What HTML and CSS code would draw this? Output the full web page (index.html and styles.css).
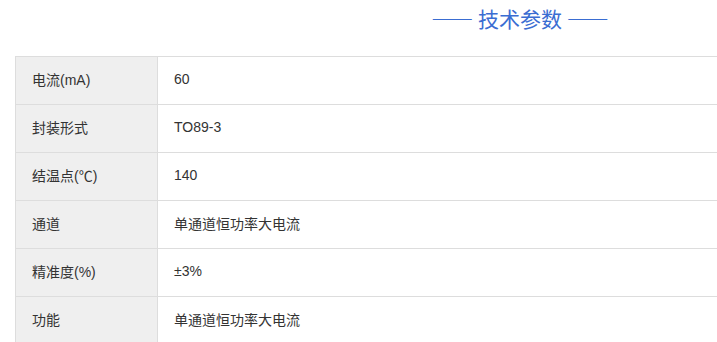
FILE: index.html
```html
<!DOCTYPE html>
<html lang="zh">
<head>
<meta charset="utf-8">
<link rel="stylesheet" href="styles.css">
</head>
<body>
<div class="wrap">
  <h2 class="title">—— 技术参数 ——</h2>
  <table class="params">
    <tr><td class="k">电流(mA)</td><td class="v">60</td></tr>
    <tr><td class="k">封装形式</td><td class="v">TO89-3</td></tr>
    <tr><td class="k">结温点(℃)</td><td class="v">140</td></tr>
    <tr><td class="k">通道</td><td class="v">单通道恒功率大电流</td></tr>
    <tr><td class="k">精准度(%)</td><td class="v">±3%</td></tr>
    <tr><td class="k">功能</td><td class="v">单通道恒功率大电流</td></tr>
  </table>
</div>
</body>
</html>
```
FILE: styles.css
```css
html, body {
  margin: 0;
  padding: 0;
  background: #fff;
  font-family: "Microsoft YaHei", "Noto Sans CJK SC", "Liberation Sans", sans-serif;
  color: #333;
  overflow: hidden;
}
.wrap {
  width: 1010px;
  padding-left: 15px;
}
.title {
  margin: 0;
  height: 56px;
  padding-top: 4px;
  box-sizing: border-box;
  text-align: center;
  font-size: 21px;
  font-weight: normal;
  line-height: 28px;
  color: #3a6dd2;
}
.params {
  width: 100%;
  border-collapse: collapse;
  font-size: 14px;
}
.params td {
  border: 1px solid #dddddd;
  height: 48px;
  padding: 0 16px 3px;
  box-sizing: border-box;
  vertical-align: middle;
  font-family: "Liberation Sans", "Noto Sans CJK SC", sans-serif;
}
.params td.k {
  width: 142px;
  background: #efefef;
}
```
